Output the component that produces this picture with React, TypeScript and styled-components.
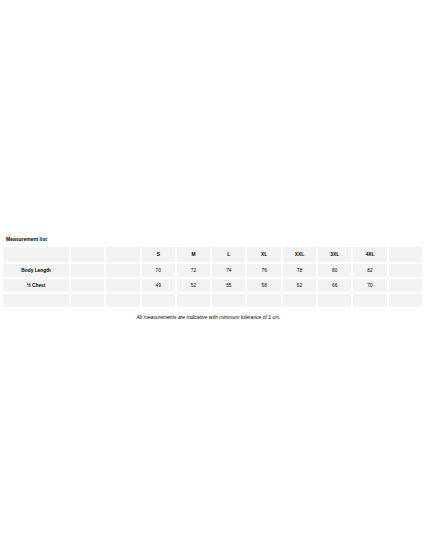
import React from "react";
import styled, { createGlobalStyle } from "styled-components";

const GlobalStyle = createGlobalStyle`
  html, body {
    margin: 0;
    padding: 0;
    background: #ffffff;
  }
  body {
    font-family: "Liberation Sans", Arial, sans-serif;
    color: #000000;
  }
`;

const Page = styled.div`
  width: 425px;
  height: 560px;
  padding: 235px 3px 0 3px;
  box-sizing: border-box;
  display: flex;
  flex-direction: column;
`;

const Title = styled.div`
  font-size: 5px;
  font-weight: bold;
  line-height: 8px;
  padding-left: 3px;
  margin-bottom: 4px;
`;

const Table = styled.div`
  display: grid;
  grid-template-columns: 66px repeat(10, 1fr);
  grid-template-rows: 15px repeat(3, 13px);
  gap: 2px;
`;

const Cell = styled.div<{ $bold?: boolean }>`
  background: #f3f3f3;
  display: flex;
  align-items: center;
  justify-content: center;
  font-size: 4.8px;
  font-weight: ${(p) => (p.$bold ? "bold" : "normal")};
  white-space: nowrap;
`;

const Note = styled.div`
  margin-top: 7px;
  text-align: center;
  font-size: 5px;
  font-style: italic;
  padding-right: 8px;
  white-space: nowrap;
`;

const sizes = ["S", "M", "L", "XL", "XXL", "3XL", "4XL"];
const rows = [
  { label: "Body Length", values: ["70", "72", "74", "76", "78", "80", "82"] },
  { label: "½ Chest", values: ["49", "52", "55", "58", "62", "66", "70"] },
];

export default function App() {
  return (
    <>
      <GlobalStyle />
      <Page>
        <Title>Measurement list</Title>
        <Table>
          <Cell />
          <Cell />
          <Cell />
          {sizes.map((s) => (
            <Cell key={s} $bold>
              {s}
            </Cell>
          ))}
          <Cell />
          {rows.map((r) => (
            <React.Fragment key={r.label}>
              <Cell $bold>{r.label}</Cell>
              <Cell />
              <Cell />
              {r.values.map((v, i) => (
                <Cell key={i}>{v}</Cell>
              ))}
              <Cell />
            </React.Fragment>
          ))}
          {Array.from({ length: 11 }).map((_, i) => (
            <Cell key={"e" + i} />
          ))}
        </Table>
        <Note>All measurements are indicative with minimum tolerance of 1 cm.</Note>
      </Page>
    </>
  );
}
